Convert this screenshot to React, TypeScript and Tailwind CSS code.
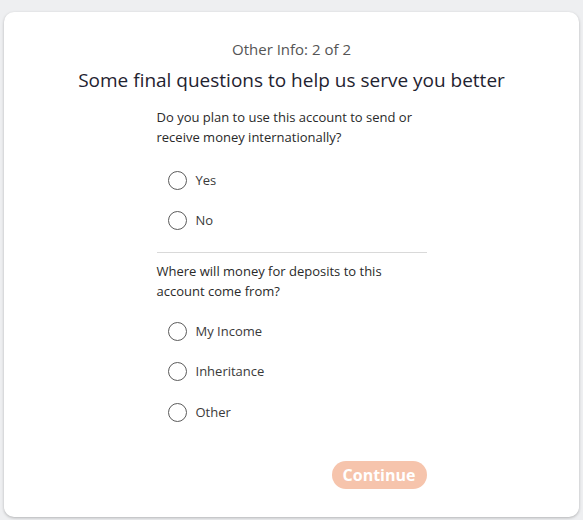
const Radio = ({ label }: { label: string }) => (
  <label className="flex items-center gap-[9px] pl-[11px] h-[40.5px] cursor-pointer">
    <span className="w-[19px] h-[19px] rounded-full border border-[#5b5b5b] bg-white shrink-0" />
    <span className="text-[13px] text-[#3a3a3a]">{label}</span>
  </label>
);

export default function App() {
  return (
    <div
      className="min-h-[520px] bg-[#eeeff1] px-[4px] pt-[12px] pb-[3px]"
      style={{ fontFamily: '"Open Sans", "Liberation Sans", sans-serif' }}
    >
      <div className="h-[505px] bg-white rounded-[10px] shadow-[0_1px_3px_rgba(0,0,0,0.25)] flex flex-col items-center pt-[27px]">
        <p className="text-[15px] text-[#555] leading-5">Other Info: 2 of 2</p>
        <h1 className="mt-[9px] text-[19px] text-[#1f2330] leading-6">
          Some final questions to help us serve you better
        </h1>

        <div className="w-[270px] mt-[15px] flex flex-col">
          <p className="text-[13px] leading-[20px] text-[#2a2a2a]">
            Do you plan to use this account to send or receive money internationally?
          </p>
          <div className="mt-[13px]">
            <Radio label="Yes" />
            <Radio label="No" />
          </div>
          <div className="mt-[11px] border-t border-[#d9d9d9]" />
          <p className="mt-[8px] text-[13px] leading-[20px] text-[#2a2a2a]">
            Where will money for deposits to this account come from?
          </p>
          <div className="mt-[10px]">
            <Radio label="My Income" />
            <Radio label="Inheritance" />
            <Radio label="Other" />
          </div>
          <div className="mt-[28px] flex justify-end">
            <button className="h-[28px] w-[95px] rounded-full bg-[#f6c4ac] text-white text-[16px] font-bold">
              Continue
            </button>
          </div>
        </div>
      </div>
    </div>
  );
}
